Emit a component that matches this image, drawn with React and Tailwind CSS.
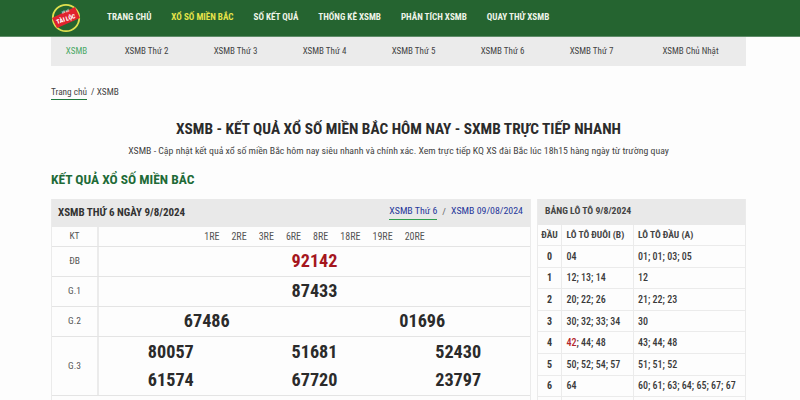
const mainNav = [
  { name: 'TRANG CHỦ' },
  { name: 'XỔ SỐ MIỀN BẮC', active: true },
  { name: 'SỐ KẾT QUẢ' },
  { name: 'THỐNG KÊ XSMB' },
  { name: 'PHÂN TÍCH XSMB' },
  { name: 'QUAY THỬ XSMB' },
]

const days = ['XSMB Thứ 2', 'XSMB Thứ 3', 'XSMB Thứ 4', 'XSMB Thứ 5', 'XSMB Thứ 6', 'XSMB Thứ 7']
const filters = ['1RE', '2RE', '3RE', '6RE', '8RE', '18RE', '19RE', '20RE']

const prizes = [
  { label: 'ĐB', rows: [['92142']], red: true, height: 'h-[30px]' },
  { label: 'G.1', rows: [['87433']], height: 'h-[30px]' },
  { label: 'G.2', rows: [['67486', '01696']], height: 'h-[30px]' },
  { label: 'G.3', rows: [['80057', '51681', '52430'], ['61574', '67720', '23797']], height: 'h-[59px]' },
]

const loto = [
  ['0', '04', '01; 01; 03; 05'],
  ['1', '12; 13; 14', '12'],
  ['2', '20; 22; 26', '21; 22; 23'],
  ['3', '30; 32; 33; 34', '30'],
  ['4', '42; 44; 48', '43; 44; 48'],
  ['5', '50; 52; 54; 57', '51; 51; 52'],
  ['6', '64', '60; 61; 63; 64; 65; 67; 67'],
]

function Logo() {
  return (
    <svg width="30" height="30" viewBox="0 0 30 30" className="shrink-0">
      <circle cx="15" cy="15" r="13.2" fill="#256430" stroke="#dfe04f" strokeWidth="1.8" />
      <path d="M1 15 L24 4 L29 15 L6 25 Z" fill="#e0232e" />
      <text x="15" y="9.5" fontSize="3" fontWeight="700" fill="#fff" textAnchor="middle" transform="rotate(-18 15 10)">XỔ SỐ</text>
      <text x="15" y="18" fontSize="6" fontWeight="900" fill="#fff" textAnchor="middle" transform="rotate(-18 15 16)">TÀI LỘC</text>
    </svg>
  )
}

function PrizeRow({ prize }) {
  return (
    <div className={`flex border-b border-[#e4e4e4] ${prize.height}`}>
      <div className="w-[47px] shrink-0 flex items-center justify-center border-r-2 border-[#ebebeb] text-[9.5px] text-[#555]">{prize.label}</div>
      <div className="flex-1 flex flex-col justify-center pb-[1px]">
        {prize.rows.map((row, i) => (
          <div key={i} className="flex h-[29px] items-center">
            {row.map((n) => (
              <div key={n} className={`flex-1 text-center text-[18.2px] font-bold ${prize.red ? 'text-[#a5161d]' : 'text-[#2b2b2b]'}`}>{n}</div>
            ))}
          </div>
        ))}
      </div>
    </div>
  )
}

function ResultCard() {
  return (
    <div className="w-[480px] shrink-0 border-l border-r border-[#ebebeb]">
      <div className="h-[28px] bg-[#e9e9e9] flex items-center justify-between pl-[6px] pr-[7px]">
        <span className="text-[11px] font-bold text-[#333]">XSMB THỨ 6 NGÀY 9/8/2024</span>
        <div className="flex items-center pb-[2px] text-[9.9px] text-[#27389b]">
          <span className="border-b border-[#2f9e4f] pb-[1px]">XSMB Thứ 6</span>
          <span className="mx-[5px] text-[#666]">/</span>
          <span className="pb-[2px]">XSMB 09/08/2024</span>
        </div>
      </div>
      <div className="flex h-[20px] border-b border-[#e4e4e4]">
        <div className="w-[47px] shrink-0 flex items-center justify-center border-r-2 border-[#ebebeb] text-[9.5px] text-[#555]">KT</div>
        <div className="flex-1 flex items-center justify-center gap-[12px] text-[10px] text-[#555]">
          {filters.map((f) => <span key={f}>{f}</span>)}
        </div>
      </div>
      {prizes.map((p) => <PrizeRow key={p.label} prize={p} />)}
    </div>
  )
}

function LotoCard() {
  return (
    <div className="w-[209px] shrink-0 border-l border-r border-[#ebebeb] font-medium">
      <div className="h-[26px] bg-[#e9e9e9] flex items-center pl-[7px] pb-[1px] text-[9.7px] font-bold text-[#444]">BẢNG LÔ TÔ 9/8/2024</div>
      <div className="flex h-[21px] border-b border-[#ebebeb] items-center text-[9.5px] font-bold text-[#444]">
        <div className="w-[24px] h-full flex items-center justify-center border-r border-[#ebebeb]">ĐẦU</div>
        <div className="w-[72px] h-full flex items-center pl-[4.5px] border-r border-[#ebebeb]">LÔ TÔ ĐUÔI (B)</div>
        <div className="flex-1 pl-[4px]">LÔ TÔ ĐẦU (A)</div>
      </div>
      {loto.map(([head, tail, front]) => (
        <div key={head} className="flex h-[21.6px] border-b border-[#ebebeb] items-center text-[10px] text-[#3a3a3a]">
          <div className="w-[24px] h-full flex items-center justify-center border-r border-[#ebebeb] font-bold">{head}</div>
          <div className="w-[72px] h-full flex items-center pl-[4.5px] border-r border-[#ebebeb] whitespace-pre">
            {head === '4' ? <><span className="text-[#b3262c]">42</span>; 44; 48</> : tail}
          </div>
          <div className="flex-1 pl-[4px]">{front}</div>
        </div>
      ))}
      <div className="flex h-[6px]">
        <div className="w-[24px] border-r border-[#ebebeb]" />
        <div className="w-[72px] border-r border-[#ebebeb]" />
      </div>
    </div>
  )
}

export default function App() {
  return (
    <div className="h-[400px] overflow-hidden bg-[#fdfdfd] font-['Roboto',sans-serif] [font-stretch:75%] text-[#333]">
      <header className="h-[37px] bg-[#256430] border-b border-[#5f8c69] pl-[51px] flex items-center">
        <Logo />
        <nav className="ml-[26px] flex gap-[20px] text-[9.1px] font-bold">
          {mainNav.map((item) => (
            <span key={item.name} className={item.active ? 'text-[#e6e34a]' : 'text-[#eef4e8]'}>{item.name}</span>
          ))}
        </nav>
      </header>

      <div className="w-[695px] ml-[51px] h-[29px] bg-[#ebebeb] flex items-center text-[9px] text-[#444]">
        <div className="w-[51px] text-center text-[#4aa866]">XSMB</div>
        {days.map((d) => <div key={d} className="w-[89px] text-center">{d}</div>)}
        <div className="flex-1 text-center pr-[1px]">XSMB Chủ Nhật</div>
      </div>

      <div className="ml-[51px] mt-[20px] h-[14px] flex items-start text-[9.3px] text-[#444] whitespace-nowrap">
        <span className="border-b border-[#1f7a3c] pb-[1px] leading-[12px]">Trang chủ</span>
        <span className="ml-[4px] leading-[12px]">/ XSMB</span>
      </div>

      <h1 className="mt-[19px] pr-[3px] text-center text-[15.3px] leading-[20px] font-bold text-[#2b2b2b]">XSMB - KẾT QUẢ XỔ SỐ MIỀN BẮC HÔM NAY - SXMB TRỰC TIẾP NHANH</h1>
      <p className="mt-[5px] pr-[3px] text-center text-[9.8px] leading-[14px] text-[#444]">XSMB - Cập nhật kết quả xổ số miền Bắc hôm nay siêu nhanh và chính xác. Xem trực tiếp KQ XS đài Bắc lúc 18h15 hàng ngày từ trường quay</p>

      <h2 className="ml-[51px] mt-[12px] text-[13.5px] leading-[18px] font-bold text-[#1f6b38]">KẾT QUẢ XỔ SỐ MIỀN BẮC</h2>

      <div className="ml-[51px] mt-[11px] flex gap-[6px]">
        <ResultCard />
        <LotoCard />
      </div>
    </div>
  )
}
